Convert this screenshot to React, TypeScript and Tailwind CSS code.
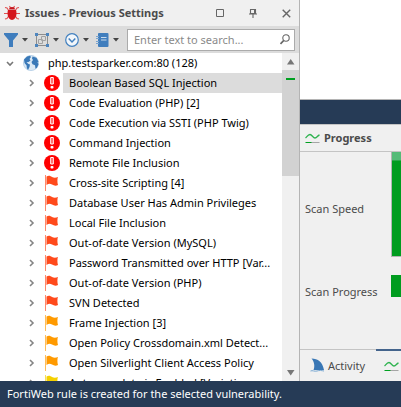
import React, { useState } from "react";

type Severity = "critical" | "high" | "medium" | "low";
type Issue = { title: string; severity: Severity };

const issues: Issue[] = [
  { title: "Boolean Based SQL Injection", severity: "critical" },
  { title: "Code Evaluation (PHP) [2]", severity: "critical" },
  { title: "Code Execution via SSTI (PHP Twig)", severity: "critical" },
  { title: "Command Injection", severity: "critical" },
  { title: "Remote File Inclusion", severity: "critical" },
  { title: "Cross-site Scripting [4]", severity: "high" },
  { title: "Database User Has Admin Privileges", severity: "high" },
  { title: "Local File Inclusion", severity: "high" },
  { title: "Out-of-date Version (MySQL)", severity: "high" },
  { title: "Password Transmitted over HTTP [Var...", severity: "high" },
  { title: "Out-of-date Version (PHP)", severity: "high" },
  { title: "SVN Detected", severity: "high" },
  { title: "Frame Injection [3]", severity: "medium" },
  { title: "Open Policy Crossdomain.xml Detect...", severity: "medium" },
  { title: "Open Silverlight Client Access Policy", severity: "medium" },
  { title: "Autocomplete is Enabled [Variatio...", severity: "low" },
];

const flagColors = { critical: "#ff0000", high: "#ff4a1c", medium: "#ff9a00", low: "#f5d000" };

export default function App() {
  const [selected, setSelected] = useState(0);
  const [query, setQuery] = useState("");

  return (
    <div className="flex h-screen flex-col overflow-hidden bg-[#f0f0f0] font-['Noto_Sans','Open_Sans',sans-serif] text-[11px] leading-5 text-black">
      <div className="flex min-h-0 flex-1">
        <section className="flex w-[300px] shrink-0 flex-col border-r border-[#b4b4b4]">
          <header className="flex h-[26px] shrink-0 items-center pr-2 pl-1">
            <BugIcon />
            <h1 className="ml-[5px] flex-1 font-bold whitespace-nowrap text-[#4b4b4b]">Issues - Previous Settings</h1>
            <div className="flex items-center gap-5 text-[#666]">
              <button aria-label="Maximize"><MaximizeIcon /></button>
              <button aria-label="Pin"><PinIcon /></button>
              <button aria-label="Close"><CloseIcon /></button>
            </div>
          </header>

          <div className="flex h-[27px] shrink-0 items-center bg-[#dcdcdc] pr-1 pl-1">
            <div className="flex w-[123px] shrink-0 justify-between pr-2">
              <ToolButton label="Filter"><FilterIcon /></ToolButton>
              <ToolButton label="Group by"><GroupIcon /></ToolButton>
              <ToolButton label="Expand"><ExpandIcon /></ToolButton>
              <ToolButton label="Report"><NotebookIcon /></ToolButton>
            </div>
            <label className="flex h-[22px] min-w-0 flex-1 items-center border border-[#ababab] bg-white pr-1 pl-1.5">
              <input
                aria-label="Search issues"
                value={query}
                onChange={(e) => setQuery(e.target.value)}
                placeholder="Enter text to search..."
                className="min-w-0 flex-1 bg-transparent outline-none placeholder:text-[#8a8a8a]"
              />
              <SearchIcon />
            </label>
          </div>

          <div className="flex min-h-0 flex-1 bg-white">
            <div className="min-w-0 flex-1 overflow-hidden">
              <div className="flex h-5 items-center pl-[6px]">
                <svg width="8" height="8" viewBox="0 0 8 8" className="mt-0.5"><path d="M1 2l3 3 3-3" fill="none" stroke="#777" strokeWidth="1.6" /></svg>
                <GlobeIcon />
                <span className="ml-[9px] whitespace-nowrap">php.testsparker.com:80 (128)</span>
              </div>
              <ul>
                {issues.map((issue, index) => (
                  <li key={issue.title}>
                    <button onClick={() => setSelected(index)} className="flex h-5 w-full items-center pl-[28px] text-left">
                      <svg width="8" height="10" viewBox="0 0 8 10" className="shrink-0"><path d="M2 2l3 3-3 3" fill="none" stroke="#858585" strokeWidth="1.6" /></svg>
                      <span className="ml-2 flex w-[19px] shrink-0">
                        {issue.severity === "critical" ? <AlertIcon /> : <FlagIcon color={flagColors[issue.severity]} />}
                      </span>
                      <span className={`h-5 min-w-0 flex-1 overflow-hidden pl-[6px] whitespace-nowrap ${index === selected ? "bg-[#dcdcdc]" : ""}`}>
                        {issue.title}
                      </span>
                    </button>
                  </li>
                ))}
              </ul>
            </div>
            <Scrollbar />
          </div>
        </section>

        <section className="flex min-w-0 flex-1 flex-col text-[#4b4b4b]">
          <div className="h-[100px] shrink-0 border-b border-[#b4b4b4] bg-white" />
          <div className="h-6 shrink-0 bg-[#263b56]" />
          <header className="flex h-[28px] shrink-0 items-center border-t border-b border-[#c4c4c4] pl-[5px]">
            <ProgressIcon />
            <h2 className="ml-1 font-bold">Progress</h2>
          </header>
          <div className="flex h-[105px] shrink-0 items-center justify-between pl-[5px]">
            <span className="pt-2 whitespace-nowrap">Scan Speed</span>
            <div className="h-full w-[10px] border-b border-l border-[#b4b4b4] bg-[#009c1f]">
              <div className="h-[9px] border-b border-[#2ba84a] bg-[#55bb78]" />
            </div>
          </div>
          <div className="mt-[18px] flex h-[22px] items-center justify-between pl-[5px]">
            <span className="pt-3 whitespace-nowrap">Scan Progress</span>
            <div className="h-[22px] w-[10px] shrink-0 bg-[#009c1f]" />
          </div>
          <div className="mt-auto flex h-8 shrink-0">
            <button className="flex flex-1 items-center border-t border-[#c4c4c4] pl-[10px]">
              <SharkIcon />
              <span className="ml-[3px]">Activity</span>
            </button>
            <button aria-label="Progress" className="flex w-[25px] items-center border-t-2 border-[#44648c] pl-2">
              <ProgressIcon />
            </button>
          </div>
        </section>
      </div>

      <footer className="h-[26px] shrink-0 bg-[#263b56] pt-[3px] pl-[7px] whitespace-nowrap text-white">
        FortiWeb rule is created for the selected vulnerability.
      </footer>
    </div>
  );
}

function ToolButton({ label, children }: { label: string; children: React.ReactNode }) {
  return (
    <button aria-label={label} className="flex items-center gap-1">
      {children}
      <svg width="6" height="4" viewBox="0 0 6 4"><path d="M0 0h6L3 3.5z" fill="#444" /></svg>
    </button>
  );
}

function Scrollbar() {
  return (
    <div className="flex w-[17px] shrink-0 flex-col bg-[#f0f0f0]">
      <button aria-label="Scroll up" className="flex h-[17px] items-center justify-center">
        <svg width="8" height="6" viewBox="0 0 8 6"><path d="M0 5.5h7.5L3.7 0z" fill="#777" /></svg>
      </button>
      <div className="h-[106px] bg-[#d2d2d2] px-1 pt-2">
        <div className="h-0.5 bg-[#00a020]" />
      </div>
      <button aria-label="Scroll down" className="mt-auto flex h-[17px] items-center justify-center">
        <svg width="8" height="6" viewBox="0 0 8 6"><path d="M0 0h7.5L3.7 5.5z" fill="#777" /></svg>
      </button>
    </div>
  );
}

function BugIcon() {
  return (
    <svg width="16" height="16" viewBox="0 0 16 16" className="shrink-0">
      <path d="M1 2.5l2 .5 2 3M15 2.5l-2 .5-2 3M0 8.500h16M1 14l2-.5 2-3M15 14l-2-.5-2-3M5.500 1l1 2M10.500 1l-1 2" fill="none" stroke="#e05050" strokeWidth="1.1" />
      <path d="M5 4.500C5 2.800 6.300 2 8 2s3 .8 3 2.500z" fill="#c5161d" />
      <path d="M4 5h8c1 3 .8 9-4 10C3.200 14 3 8 4 5z" fill="#d4141c" />
    </svg>
  );
}

function MaximizeIcon() {
  return <svg width="9" height="9" viewBox="0 0 9 9"><path d="M.5.5h7v7h-7z" fill="none" stroke="currentColor" /></svg>;
}

function PinIcon() {
  return (
    <svg width="9" height="10" viewBox="0 0 9 10" className="ml-1">
      <path d="M1.500 1.500h5v4h-5zM0 6h8M4 6v4" fill="none" stroke="currentColor" strokeWidth="1.1" />
      <path d="M5 1h1.700v5H5z" fill="currentColor" />
    </svg>
  );
}

function CloseIcon() {
  return <svg width="9" height="9" viewBox="0 0 9 9" className="ml-1"><path d="M.7.7l7.500 7.500M8.200.7L.7 8.200" stroke="currentColor" strokeWidth="1.4" /></svg>;
}

function FilterIcon() {
  return <svg width="14" height="14" viewBox="0 0 14 14"><path d="M0 0h14v1.500L9 7.500V14H5V7.500L0 1.500z" fill="#3f7dbd" /></svg>;
}

function GroupIcon() {
  return (
    <svg width="14" height="14" viewBox="0 0 14 14">
      <path d="M1.500 1.500h11v11h-11z" fill="none" stroke="#8d8d8d" />
      <path d="M6.500 3.500h4v4h-4zM3.500 6.500h4v4h-4z" fill="#dcdcdc" stroke="#a2a2a2" />
      <path d="M0 0h3v3H0zM11 0h3v3h-3zM0 11h3v3H0zM11 11h3v3h-3z" fill="#4e86bf" />
    </svg>
  );
}

function ExpandIcon() {
  return (
    <svg width="14" height="14" viewBox="0 0 14 14">
      <circle cx="7" cy="7" r="6.300" fill="#f2f6fa" stroke="#4280bf" strokeWidth="1.200" />
      <path d="M3.700 5.500L7 9l3.300-3.500" fill="none" stroke="#4280bf" strokeWidth="1.500" />
    </svg>
  );
}

function NotebookIcon() {
  return (
    <svg width="13" height="14" viewBox="0 0 13 14">
      <rect x="2" width="10.500" height="14" rx="1" fill="#3f7dbd" />
      <path d="M5 4.500h5.500M5 7h5.500" stroke="#c8daec" />
      <path d="M0 3.500h3M0 5.500h3M0 8.500h3M0 10.500h3" stroke="#79a4d0" />
    </svg>
  );
}

function SearchIcon() {
  return (
    <svg width="10" height="11" viewBox="0 0 10 11" className="shrink-0">
      <circle cx="6" cy="4" r="3.200" fill="none" stroke="#666" strokeWidth="1.100" />
      <path d="M3.800 6.400L.5 10" stroke="#666" strokeWidth="1.600" />
    </svg>
  );
}

function GlobeIcon() {
  return (
    <svg width="16" height="16" viewBox="0 0 16 16" className="ml-[9px] shrink-0">
      <circle cx="8" cy="8" r="7.600" fill="#dbe9f5" stroke="#a9c7e2" strokeWidth=".7" />
      <path d="M1 4.500L4 1.500 7 .8 8 2 6.500 4 7.500 5.500 5.500 7 3.500 7.200 5.500 9 7 9.500 6.500 12 5 15 3.800 13 3.600 10.500 1.500 8zM9.500 1.500l4 1.200 2 4-1 .5 1 2-1.500 3.500-1.500 1-.5-3.500-2.500-1L8.500 7 10 5 9 3.500z" fill="#3a79b8" />
    </svg>
  );
}

function AlertIcon() {
  return (
    <svg width="16" height="16" viewBox="0 0 16 16">
      <circle cx="8" cy="8" r="8" fill="#ff0000" />
      <path d="M6.700 2.500h2.600v6.500H6.700z" fill="#ff5050" stroke="#fff" strokeWidth="1" />
      <rect x="6.500" y="11" width="3" height="2.500" rx="1" fill="#fff" />
    </svg>
  );
}

function FlagIcon({ color }: { color: string }) {
  return (
    <svg width="16" height="16" viewBox="0 0 16 16">
      <path d="M1.500 0v16" stroke={color} strokeWidth="1" opacity=".65" />
      <path d="M2.500 1.500C5 0 6.500 1 8 2c2 1 4 .8 6 0-.8 1.500-.8 6 0 8-2 1-4 .8-6-.5-2-1-3.500-.8-5.500.5z" fill={color} />
    </svg>
  );
}

function ProgressIcon() {
  return (
    <svg width="15" height="12" viewBox="0 0 15 12" className="shrink-0">
      <path d="M.5 6C2 4.500 3 2.500 5 2.500S8 6 10 6s2.500-2.500 4.500-3" fill="none" stroke="#2eb34f" strokeWidth="1.300" />
      <path d="M6 10.500h8.500" stroke="#a5a5a5" />
      <path d="M.5 10.500h6" stroke="#00a020" />
    </svg>
  );
}

function SharkIcon() {
  return (
    <svg width="15" height="15" viewBox="0 0 15 15" className="shrink-0">
      <path d="M1.500.5C8 .5 12.500 4 14 12H3.500C5 8.500 4.500 4 1.500.5z" fill="#3977b5" />
      <path d="M.5 13c2-1 4 .8 6.500 0s4.500-.5 7 0" fill="none" stroke="#78a8d3" />
    </svg>
  );
}
